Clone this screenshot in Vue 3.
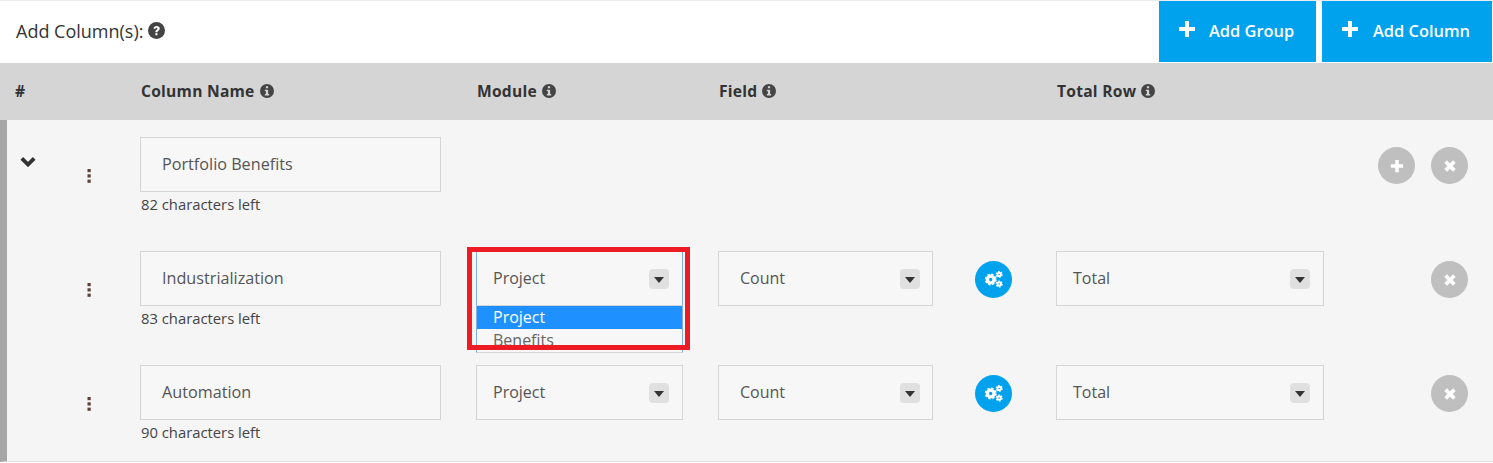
<template>
  <div class="page">
    <div class="toolbar">
      <div class="title">
        Add Column(s):
        <svg class="help" viewBox="0 0 16 16" aria-hidden="true">
          <circle cx="8" cy="8" r="8" fill="#444" />
          <path d="M5.2 6.2C5.4 4.700 6.500 3.800 8.100 3.800c1.700 0 3 1 3 2.400 0 1.900-2.200 1.900-2.200 3.400H6.900c0-2.500 2-2.300 2-3.300 0-.5-.4-.8-.9-.8-.7 0-1 .4-1.200 1.100z" fill="#fff" />
          <rect x="6.900" y="10.500" width="2" height="2" fill="#fff" />
        </svg>
      </div>
      <div class="toolbar-actions">
        <button class="primary add-group" type="button">
          <svg class="plus" viewBox="0 0 16 16"><path d="M6 0h4v6h6v4h-6v6H6v-6H0V6h6z" fill="#fff" /></svg>
          <span>Add Group</span>
        </button>
        <button class="primary add-column" type="button">
          <svg class="plus" viewBox="0 0 16 16"><path d="M6 0h4v6h6v4h-6v6H6v-6H0V6h6z" fill="#fff" /></svg>
          <span>Add Column</span>
        </button>
      </div>
    </div>

    <div class="grid head">
      <div>#</div>
      <div></div>
      <div v-for="h in ['Column Name', 'Module', 'Field']" :key="h" class="head-cell">
        {{ h }}
        <svg class="info" viewBox="0 0 16 16">
          <path fill-rule="evenodd" d="M8 0a8 8 0 1 1 0 16A8 8 0 0 1 8 0zM6.700 2.600v2.300h2.600V2.600zM5.500 6.500v1.600h1.200v3.200H5.500v1.700h5v-1.700H9.300V6.500z" fill="#444" />
        </svg>
      </div>
      <div></div>
      <div class="head-cell">
        Total Row
        <svg class="info" viewBox="0 0 16 16">
          <path fill-rule="evenodd" d="M8 0a8 8 0 1 1 0 16A8 8 0 0 1 8 0zM6.700 2.600v2.300h2.600V2.600zM5.500 6.500v1.600h1.200v3.200H5.500v1.700h5v-1.700H9.300V6.500z" fill="#444" />
        </svg>
      </div>
    </div>

    <div class="rows">
      <div v-for="row in rows" :key="row.name" class="grid row">
        <div class="toggle">
          <svg v-if="row.group" class="chevron" viewBox="0 0 16 11">
            <path d="M1.800 2.300L8 8.500l6.200-6.200" fill="none" stroke="#333" stroke-width="3.800" />
          </svg>
        </div>
        <div class="drag">
          <svg viewBox="0 0 4 14" class="dots">
            <rect x="0.500" y="0" width="3.200" height="3.200" fill="#5d4037" />
            <rect x="0.500" y="5.300" width="3.200" height="3.200" fill="#5d4037" />
            <rect x="0.500" y="10.600" width="3.200" height="3.200" fill="#5d4037" />
          </svg>
        </div>
        <div>
          <div class="field name-field">{{ row.name }}</div>
          <div class="left-count">{{ row.left }} characters left</div>
        </div>

        <template v-if="row.group">
          <div></div>
          <div></div>
          <div></div>
          <div></div>
          <div class="actions">
            <span class="round grey">
              <svg viewBox="0 0 16 16" class="round-icon"><path d="M6 1h4v5h5v4h-5v5H6v-5H1V6h5z" fill="#fff" /></svg>
            </span>
            <span class="round grey">
              <svg viewBox="0 0 16 16" class="round-icon"><path d="M4.500 1.500L8 5l3.500-3.500 3 3L11 8l3.500 3.500-3 3L8 11l-3.500 3.500-3-3L5 8 1.500 4.500z" fill="#fff" /></svg>
            </span>
          </div>
        </template>

        <template v-else>
          <div class="select-wrap">
            <div class="field select" :class="{ open: row.open }">
              {{ row.module }}
              <span class="arrow"></span>
            </div>
            <div v-if="row.open" class="menu">
              <div class="option active">Project</div>
              <div class="option">Benefits</div>
            </div>
          </div>
          <div class="field select field-select">
            Count
            <span class="arrow"></span>
          </div>
          <div>
            <span class="round blue">
              <svg viewBox="0 0 18 17" class="cogs">
                <g fill="none" stroke="#fff">
                  <circle cx="5.700" cy="8.500" r="3.300" stroke-width="3.200" />
                  <circle cx="5.700" cy="8.500" r="5.200" stroke-width="1.600" stroke-dasharray="2.300 1.780" />
                  <circle cx="14.200" cy="3.400" r="1.700" stroke-width="1.900" />
                  <circle cx="14.200" cy="3.400" r="3" stroke-width="1.100" stroke-dasharray="1.700 1.440" />
                  <circle cx="14.200" cy="13" r="1.700" stroke-width="1.900" />
                  <circle cx="14.200" cy="13" r="3" stroke-width="1.100" stroke-dasharray="1.700 1.440" />
                </g>
              </svg>
            </span>
          </div>
          <div class="field select total-select">
            Total
            <span class="arrow"></span>
          </div>
          <div class="actions end">
            <span class="round grey">
              <svg viewBox="0 0 16 16" class="round-icon"><path d="M4.500 1.500L8 5l3.500-3.500 3 3L11 8l3.500 3.500-3 3L8 11l-3.500 3.500-3-3L5 8 1.500 4.500z" fill="#fff" /></svg>
            </span>
          </div>
        </template>
      </div>
    </div>

    <div class="callout"></div>
  </div>
</template>

<script setup>
const rows = [
  { name: 'Portfolio Benefits', left: 82, group: true },
  { name: 'Industrialization', left: 83, module: 'Project', open: true },
  { name: 'Automation', left: 90, module: 'Project' }
]
</script>

<style>
html,
body {
  margin: 0;
  background: #fff;
}
</style>

<style scoped>
.page {
  position: relative;
  width: 1493px;
  height: 463px;
  overflow: hidden;
  font-family: 'Open Sans', 'Liberation Sans', sans-serif;
  color: #555;
  border-top: 1px solid #e8ebf0;
  box-sizing: border-box;
}

.toolbar {
  display: flex;
  justify-content: space-between;
  height: 61px;
  background: #fff;
}

.title {
  display: flex;
  align-items: center;
  gap: 5px;
  padding-left: 16px;
  padding-bottom: 2px;
  font-size: 18px;
  color: #333;
}

.help {
  width: 17px;
  height: 17px;
}

.toolbar-actions {
  display: flex;
  gap: 6px;
  padding-right: 1px;
}

.primary {
  display: flex;
  align-items: center;
  height: 61px;
  border: 0;
  padding: 0 0 2px 20px;
  background: #00a2ee;
  color: #fff;
  font: 600 16.4px 'Open Sans', 'Liberation Sans', sans-serif;
}

.add-group {
  width: 157px;
}

.add-column {
  width: 170px;
}

.plus {
  width: 16px;
  height: 16px;
  margin-right: 14px;
  margin-top: -3px;
}

.add-column .plus {
  margin-right: 15px;
}

.grid {
  display: grid;
  grid-template-columns: 70px 63px 336px 242px 257px 81px 322px 1fr;
}

.head {
  align-items: center;
  height: 57px;
  margin-top: 1px;
  padding-left: 7px;
  padding-bottom: 2px;
  box-sizing: border-box;
  background: #d5d5d5;
  font-size: 15.6px;
  font-weight: 700;
  letter-spacing: 0.25px;
  color: #333;
}

.head > div:first-child {
  margin-left: -7px;
  padding-left: 15px;
}

.head-cell {
  display: flex;
  align-items: center;
  gap: 5px;
  padding-left: 1px;
}

.info {
  width: 14px;
  height: 14px;
}

.rows {
  height: 342px;
  background: #f5f5f5;
  border-left: 7px solid #a6a6a6;
  border-bottom: 1px solid #e4e4e4;
  box-sizing: border-box;
}

.row {
  height: 114px;
  padding-top: 17px;
  box-sizing: border-box;
}

.toggle {
  padding-left: 13px;
  padding-top: 19px;
}

.chevron {
  display: block;
  width: 16px;
  height: 11px;
}

.drag {
  padding-left: 10px;
  padding-top: 32px;
}

.dots {
  display: block;
  width: 4px;
  height: 14px;
}

.field {
  display: flex;
  align-items: center;
  height: 55px;
  box-sizing: border-box;
  border: 1px solid #d5d5d5;
  padding-bottom: 2px;
  background: #f7f7f7;
  font-size: 16px;
  color: #555;
}

.name-field {
  width: 301px;
  padding-left: 21px;
  font-size: 16.2px;
}

.left-count {
  margin-top: 3px;
  padding-left: 1px;
  font-size: 14.8px;
  line-height: 19px;
  color: #444;
}

.select {
  position: relative;
  padding-left: 16px;
}

.select-wrap {
  position: relative;
  width: 207px;
}

.select.open {
  border-color: #7db0e4;
  border-bottom-color: #d5d5d5;
}

.field-select {
  width: 215px;
  padding-left: 21px;
}

.total-select {
  width: 268px;
}

.arrow {
  position: absolute;
  top: 17px;
  right: 13px;
  width: 20px;
  height: 20px;
  border-radius: 4px;
  background: #e0e0e0;
}

.field-select .arrow {
  right: 12px;
}

.arrow::after {
  content: '';
  position: absolute;
  top: 8px;
  left: 5px;
  border-left: 5px solid transparent;
  border-right: 5px solid transparent;
  border-top: 6px solid #333;
}

.menu {
  position: absolute;
  top: 55px;
  left: 0;
  right: 0;
  height: 47px;
  box-sizing: border-box;
  border: 1px solid #7db0e4;
  border-top: 0;
  border-bottom-color: #d5d5d5;
  background: #f7f7f7;
}

.option {
  height: 23px;
  padding-left: 16px;
  font-size: 16px;
  line-height: 23px;
  color: #666;
}

.option.active {
  background: #1e90ff;
  color: #fff;
}

.round {
  display: flex;
  align-items: center;
  justify-content: center;
  width: 37px;
  height: 37px;
  border-radius: 50%;
}

.grey {
  background: #bfbfbf;
}

.blue {
  background: #00a2ee;
  margin-top: 10px;
}

.actions {
  display: flex;
  gap: 16px;
  padding-top: 10px;
}

.actions.end {
  padding-left: 53px;
}

.round-icon {
  width: 14px;
  height: 14px;
}

.cogs {
  width: 18px;
  height: 17px;
}

.callout {
  position: absolute;
  left: 467px;
  top: 246px;
  width: 223px;
  height: 103px;
  box-sizing: border-box;
  border: 5px solid #ed1c24;
}
</style>
